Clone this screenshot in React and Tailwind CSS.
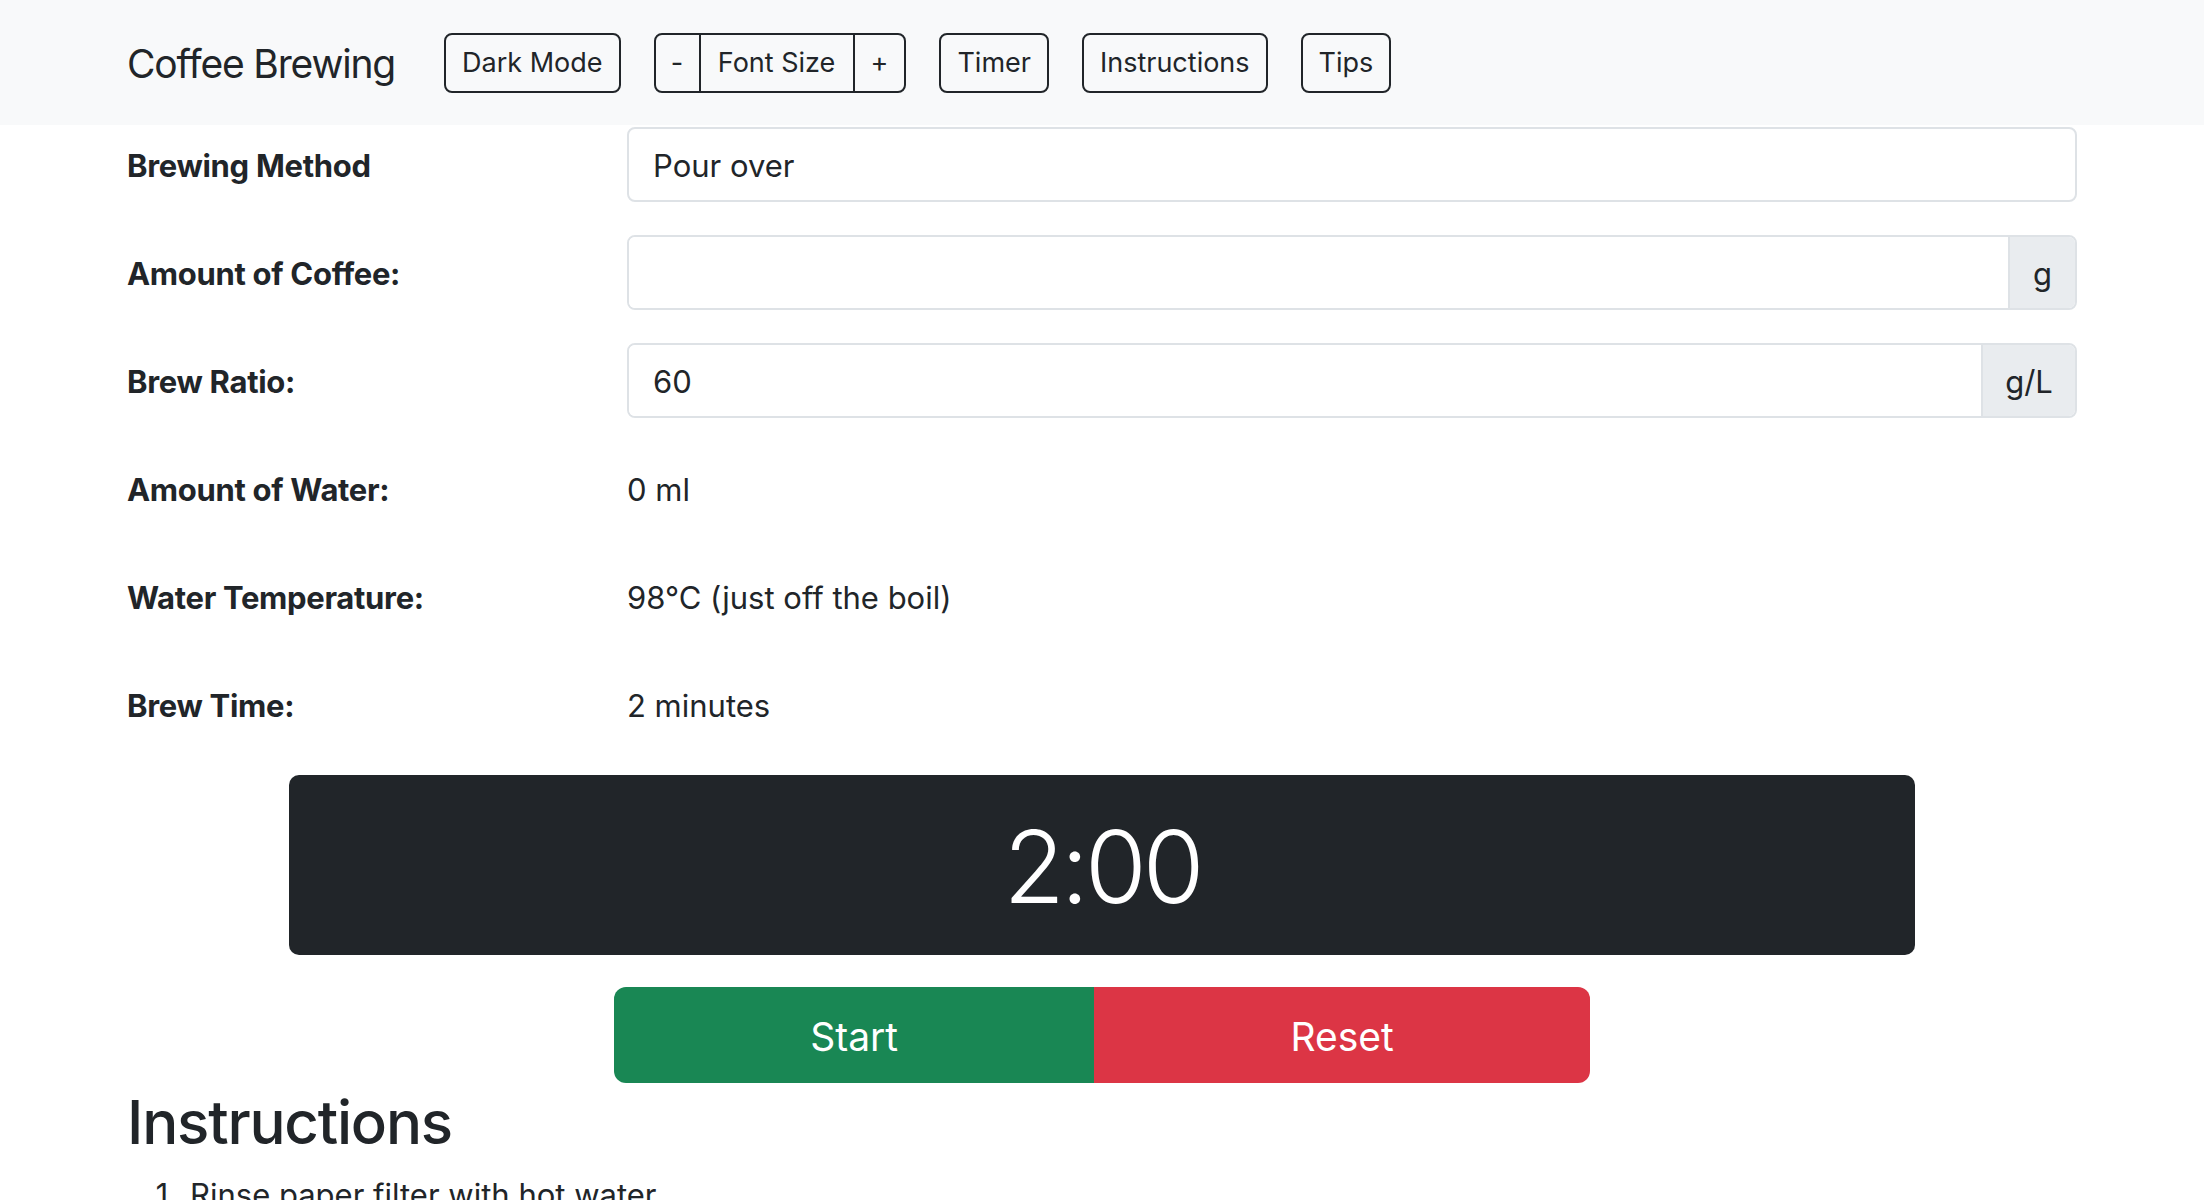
import { useState } from 'react'

const rows = [
  { label: 'Amount of Water:', value: '0 ml' },
  { label: 'Water Temperature:', value: '98°C (just off the boil)' },
  { label: 'Brew Time:', value: '2 minutes' },
]

const steps = [
  'Rinse paper filter with hot water',
  'Add ground coffee to the filter',
  'Pour a little water to let the coffee bloom',
  'Slowly pour the rest of the water in circles',
]

function NavButton({ children }) {
  return (
    <button
      type="button"
      className="h-[60px] px-[16px] border-2 border-[#212529] rounded-[8px] text-[27px] leading-none text-[#212529]"
    >
      {children}
    </button>
  )
}

function Row({ label, children }) {
  return (
    <div className="grid grid-cols-[500px_1fr] items-center h-[75px] mb-[33px]">
      <div className="text-[31px] font-bold tracking-[-0.01em] pt-[4px]">{label}</div>
      <div>{children}</div>
    </div>
  )
}

export default function App() {
  const [coffee, setCoffee] = useState('')
  const [ratio, setRatio]   = useState('60')

  return (
    <div className="min-h-screen bg-white text-[#212529] font-['Inter',sans-serif]">
      {/* Navbar */}
      <nav className="h-[125px] bg-[#f8f9fa] flex items-center px-[127px]">
        <span className="text-[39px] mr-[49px] leading-none tracking-[-0.03em] pt-[2px]">Coffee Brewing</span>
        <div className="flex items-center gap-[33px]">
          <NavButton>Dark Mode</NavButton>
          <div className="flex h-[60px] border-2 border-[#212529] rounded-[8px] text-[27px] leading-none">
            <button type="button" className="w-[45px] border-r-2 border-[#212529]">-</button>
            <button type="button" className="w-[154px] border-r-2 border-[#212529]">Font Size</button>
            <button type="button" className="flex-1 px-[16px]">+</button>
          </div>
          <NavButton>Timer</NavButton>
          <NavButton>Instructions</NavButton>
          <NavButton>Tips</NavButton>
        </div>
      </nav>

      <main className="px-[127px] pt-[2px]">
        <Row label="Brewing Method">
          <div className="h-[75px] border-2 border-[#dee2e6] rounded-[8px] flex items-center px-[24px] pt-[4px] text-[31px]">
            Pour over
          </div>
        </Row>

        <Row label="Amount of Coffee:">
          <div className="flex h-[75px] border-2 border-[#dee2e6] rounded-[8px] overflow-hidden text-[31px]">
            <input
              value={coffee}
              onChange={(e) => setCoffee(e.target.value)}
              className="flex-1 min-w-0 px-[24px] pt-[4px] outline-none bg-white"
            />
            <span className="w-[67px] flex items-center justify-center pt-[4px] bg-[#e9ecef] border-l-2 border-[#dee2e6]">g</span>
          </div>
        </Row>

        <Row label="Brew Ratio:">
          <div className="flex h-[75px] border-2 border-[#dee2e6] rounded-[8px] overflow-hidden text-[31px]">
            <input
              value={ratio}
              onChange={(e) => setRatio(e.target.value)}
              className="flex-1 min-w-0 px-[24px] pt-[4px] outline-none bg-white"
            />
            <span className="w-[94px] flex items-center justify-center pt-[4px] bg-[#e9ecef] border-l-2 border-[#dee2e6]">g/L</span>
          </div>
        </Row>

        {rows.map((r) => (
          <Row key={r.label} label={r.label}>
            <div className="text-[31px] pt-[4px]">{r.value}</div>
          </Row>
        ))}

        {/* Timer */}
        <div className="w-[1626px] h-[180px] mx-auto bg-[#212529] rounded-[10px] flex items-center justify-center text-white text-[100px] font-light leading-none tracking-[-0.04em] pt-[4px]">
          2:00
        </div>

        <div className="w-[976px] h-[96px] mx-auto mt-[32px] flex text-white text-[39px]">
          <button type="button" className="flex-auto px-[31px] pt-[4px] bg-[#198754] rounded-l-[12px]">Start</button>
          <button type="button" className="flex-auto px-[31px] pt-[4px] bg-[#dc3545] rounded-r-[12px]">Reset</button>
        </div>

        <h2 className="text-[60px] font-medium leading-[1.2] tracking-[-0.02em] pt-[3px] mb-[14px]">Instructions</h2>
        <ol className="list-decimal pl-[63px] text-[31px] leading-[1.5]">
          {steps.map((s) => (
            <li key={s}>{s}</li>
          ))}
        </ol>
      </main>
    </div>
  )
}
